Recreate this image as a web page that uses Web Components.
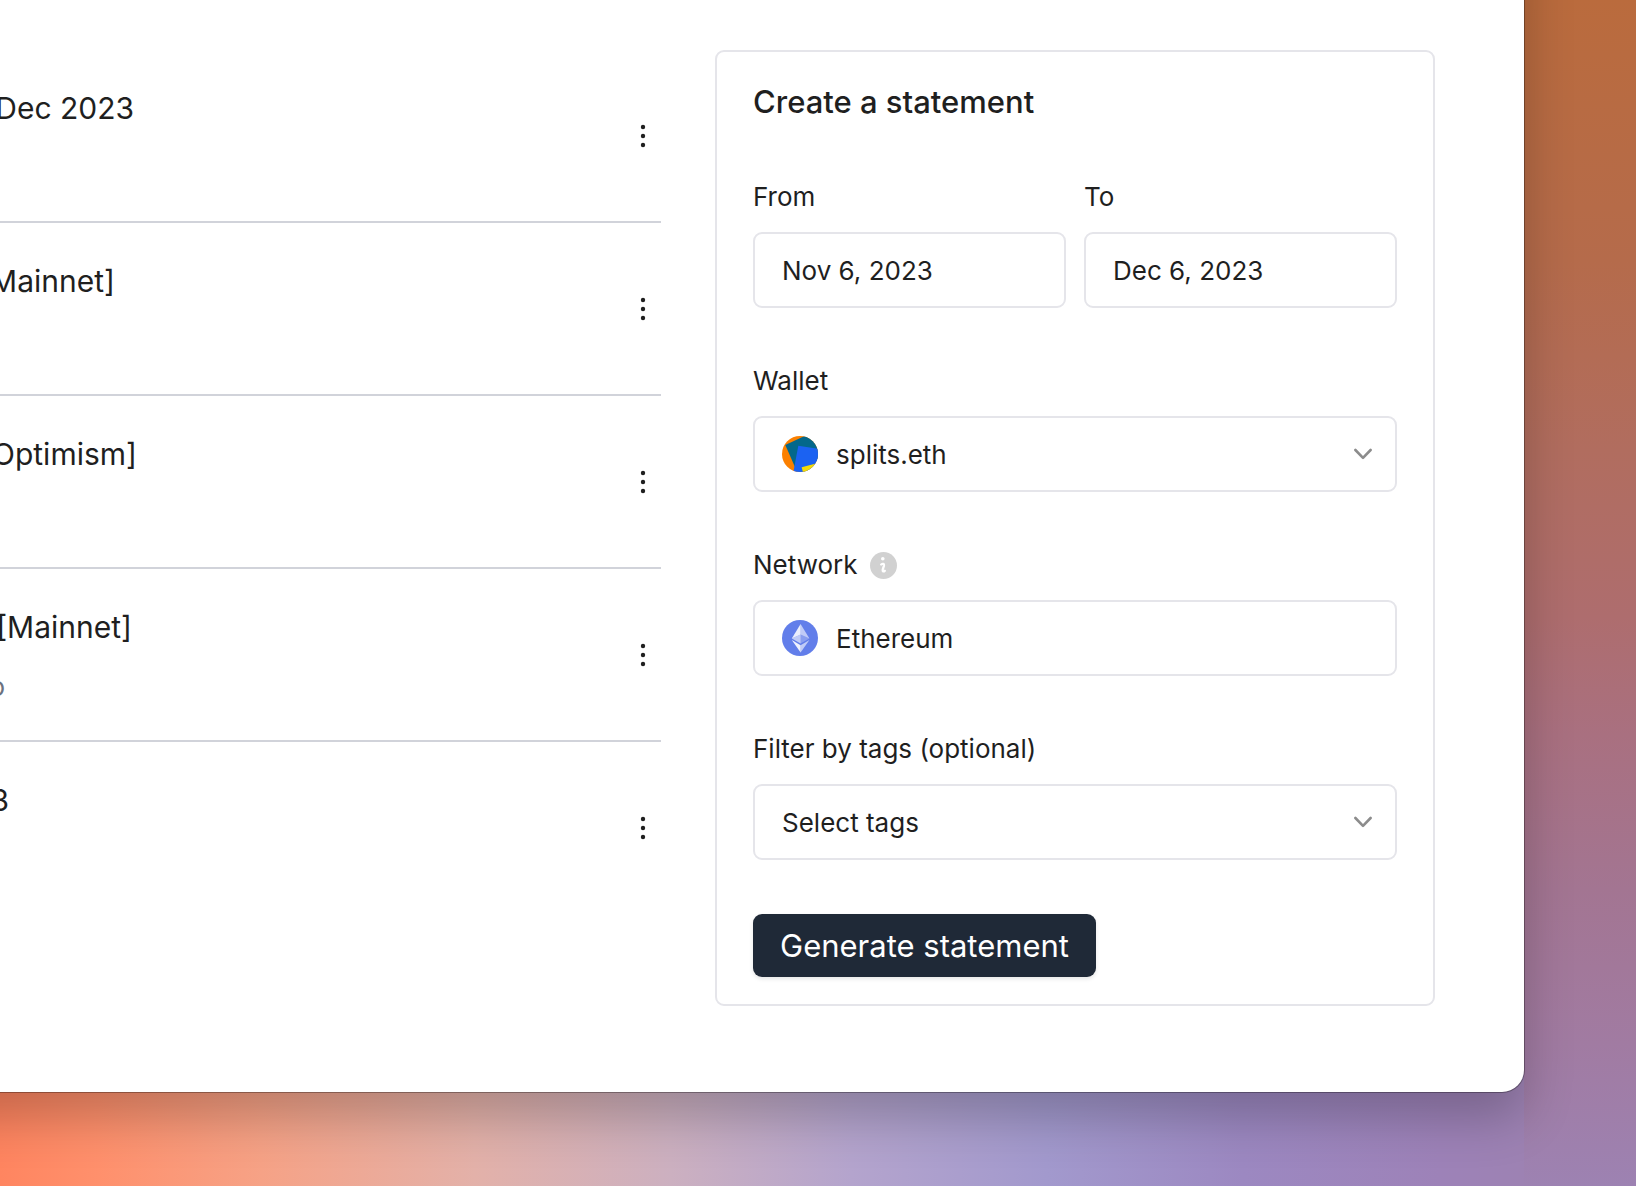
<!DOCTYPE html>
<html lang="en">
<head>
<meta charset="utf-8">
<title>Statements</title>
<style>
    :root {
        --text: #1f1f1f;
        --muted-text: #6b7280;
        --border: #e5e5ea;
        --divider: #d1d3da;
        --surface: #ffffff;
        --primary: #1f2937;
        --icon: #8c8c8c;
    }
    html {
        min-height: 100%;
        background:
            linear-gradient(to bottom, #ba6b3d 0%, #b56b4b 22%, #b16d5f 38%, #ae6d6e 52%, #a97080 62%, #a37592 75%, #a17ba2 88%, #9d82b2 100%) right top / 112px 100% no-repeat,
            linear-gradient(to right, #ff8560 0%, #ff906c 6%, #f6a286 16%, #e3b1a9 29%, #ccb0c0 41%, #b4a4cd 52%, #a299cd 64%, #9c88c1 76%, #9d82b8 88%, #9d82b2 94%);
    }
    body {
        margin: 0;
        font-family: Inter, "Liberation Sans", sans-serif;
        color: var(--text);
    }
</style>
</head>
<body>
<app-window>
    <statement-list slot="list">
        <statement-row visible="134">Dec 2023</statement-row>
        <statement-row visible="115">Mainnet]</statement-row>
        <statement-row visible="137">Optimism]</statement-row>
        <statement-row visible="132" note="o">[Mainnet]</statement-row>
        <statement-row visible="9">3</statement-row>
    </statement-list>
    <statement-form></statement-form>
</app-window>

<script>
const icons = {
    more: `<svg width="36" height="36" viewBox="0 0 36 36" fill="currentColor" aria-hidden="true">
        <circle cx="18" cy="9" r="2.2"/><circle cx="18" cy="18" r="2.2"/><circle cx="18" cy="27" r="2.2"/>
    </svg>`,
    chevron: `<svg width="18" height="12" viewBox="0 0 18 12" fill="none" stroke="currentColor" stroke-width="2.6" stroke-linecap="round" stroke-linejoin="round" aria-hidden="true">
        <path d="M1.4 2L9 9.8L16.6 2"/>
    </svg>`,
    info: `<svg width="27" height="27" viewBox="0 0 27 27" aria-hidden="true">
        <circle cx="13.5" cy="13.5" r="13.5" fill="#d1d1d1"/>
        <circle cx="12.8" cy="6.7" r="1.8" fill="#fff"/>
        <path d="M11.2 12.5C12.6 11.3 14.4 11.7 14 13.6L12.7 17.6C12.3 19.6 13.6 19.9 14.8 18.8" fill="none" stroke="#fff" stroke-width="2.3" stroke-linecap="round" stroke-linejoin="round"/>
    </svg>`,
    wallet: `<svg width="36" height="36" viewBox="0 0 36 36" aria-hidden="true">
        <clipPath id="round"><circle cx="18" cy="18" r="18"/></clipPath>
        <g clip-path="url(#round)">
            <path d="M0 0H36V36H0Z" fill="#fb8000"/>
            <path d="M3.3 9L21 .8L30 -2L42 22L14 33.5Z" fill="#03688b"/>
            <path d="M16.3 9.8L38 13V38H11Z" fill="#1b62f2"/>
            <path d="M19.6 31.2L36 27V38H21.5Z" fill="#f4db05"/>
        </g>
    </svg>`,
    ethereum: `<svg width="36" height="36" viewBox="0 0 36 36" aria-hidden="true">
        <circle cx="18" cy="18" r="18" fill="#627eea"/>
        <path d="M18.6 4V14.5L9.8 18.4Z" fill="#fff" opacity=".88"/>
        <path d="M18.6 4V14.5L27.4 18.4Z" fill="#fff" opacity=".6"/>
        <path d="M18.6 14.5V23.6L9.8 18.4Z" fill="#fff" opacity=".6"/>
        <path d="M18.6 14.5V23.6L27.4 18.4Z" fill="#fff" opacity=".25"/>
        <path d="M9.8 20.1L18.6 25.3V32.4Z" fill="#fff" opacity=".9"/>
        <path d="M27.4 20.1L18.6 25.3V32.4Z" fill="#fff" opacity=".6"/>
    </svg>`
};

class AppWindow extends HTMLElement {
    connectedCallback() {
        this.attachShadow({ mode: 'open' });
        this.shadowRoot.innerHTML = `
            <style>
                :host {
                    display: block;
                    padding-right: 112px;
                    padding-bottom: 94px;
                    overflow: hidden;
                }
                /* top and left edges sit outside the viewport */
                .window {
                    display: grid;
                    grid-template-columns: minmax(0, 1fr) 720px;
                    gap: 54px;
                    align-items: start;
                    margin-top: -72px;
                    margin-left: -72px;
                    padding: 122px 89px 86px 72px;
                    background: var(--surface);
                    border-radius: 0 0 22px 0;
                    box-shadow: 0 0 0 1px rgba(0, 0, 0, 0.3), 0 26px 50px rgba(0, 0, 0, 0.23);
                }
            </style>
            <main class="window">
                <slot name="list"></slot>
                <slot></slot>
            </main>
        `;
    }
}
customElements.define('app-window', AppWindow);

class StatementList extends HTMLElement {
    connectedCallback() {
        this.attachShadow({ mode: 'open' });
        this.shadowRoot.innerHTML = `
            <style>
                :host {
                    display: block;
                    min-width: 0;
                }
                ::slotted(:not(:last-child)) {
                    border-bottom: 2px solid var(--divider);
                }
            </style>
            <slot></slot>
        `;
    }
}
customElements.define('statement-list', StatementList);

class StatementRow extends HTMLElement {
    connectedCallback() {
        const visible = this.getAttribute('visible');
        const note = this.getAttribute('note') || '';
        this.attachShadow({ mode: 'open' });
        this.shadowRoot.innerHTML = `
            <style>
                :host {
                    display: flex;
                    align-items: center;
                    justify-content: space-between;
                    padding: 36px 0;
                }
                .text {
                    display: grid;
                    gap: 18px;
                }
                /* text runs off the left edge of the window */
                .title, .note {
                    display: flex;
                    justify-content: flex-end;
                    white-space: nowrap;
                }
                .title {
                    width: ${visible}px;
                    font-size: 30px;
                    line-height: 45px;
                }
                .note {
                    width: 5px;
                    height: 36px;
                    font-size: 26px;
                    line-height: 38px;
                    color: var(--muted-text);
                }
                button {
                    display: flex;
                    padding: 0;
                    border: 0;
                    background: none;
                    color: inherit;
                    cursor: pointer;
                }
            </style>
            <div class="text">
                <div class="title"><slot></slot></div>
                <div class="note">${note}</div>
            </div>
            <button type="button" aria-label="More">${icons.more}</button>
        `;
    }
}
customElements.define('statement-row', StatementRow);

class FormField extends HTMLElement {
    connectedCallback() {
        const label = this.getAttribute('label');
        const value = this.getAttribute('value');
        const icon = icons[this.getAttribute('icon')] || '';
        const isSelect = this.getAttribute('type') === 'select';
        const control = isSelect
            ? `<select id="control"><option>${value}</option></select>`
            : `<input id="control" type="text" value="${value}" ${icon ? 'readonly' : ''}>`;
        this.attachShadow({ mode: 'open' });
        this.shadowRoot.innerHTML = `
            <style>
                :host {
                    display: flex;
                    flex-direction: column;
                    gap: 16px;
                    min-width: 0;
                    font-size: 26px;
                    line-height: 38px;
                }
                .label {
                    display: flex;
                    align-items: center;
                    gap: 12px;
                }
                .label svg {
                    display: block;
                }
                .box {
                    display: grid;
                    align-items: center;
                }
                .box > * {
                    grid-area: 1 / 1;
                }
                .box svg {
                    pointer-events: none;
                    z-index: 1;
                }
                .leading {
                    display: flex;
                    margin-left: 29px;
                    justify-self: start;
                }
                .trailing {
                    display: flex;
                    margin-right: 25px;
                    justify-self: end;
                    color: var(--icon);
                }
                input, select {
                    box-sizing: border-box;
                    width: 100%;
                    height: 76px;
                    margin: 0;
                    padding: 0 27px 0 ${icon ? 81 : 27}px;
                    border: 2px solid var(--border);
                    border-radius: 9px;
                    background: var(--surface);
                    color: inherit;
                    font: inherit;
                    appearance: none;
                }
                select {
                    padding-top: 2px;
                }
            </style>
            <div class="label">
                <label for="control">${label}</label>
                ${this.hasAttribute('info') ? icons.info : ''}
            </div>
            <div class="box">
                ${control}
                ${icon ? `<span class="leading">${icon}</span>` : ''}
                ${isSelect ? `<span class="trailing">${icons.chevron}</span>` : ''}
            </div>
        `;
    }
}
customElements.define('form-field', FormField);

class PrimaryButton extends HTMLElement {
    connectedCallback() {
        this.attachShadow({ mode: 'open' });
        this.shadowRoot.innerHTML = `
            <style>
                :host {
                    display: flex;
                }
                button {
                    padding: 9px 27px;
                    border: 0;
                    border-radius: 9px;
                    background: var(--primary);
                    box-shadow: 0 2px 4px rgba(0, 0, 0, 0.1);
                    color: #fff;
                    font: inherit;
                    font-size: 31px;
                    line-height: 45px;
                    cursor: pointer;
                }
            </style>
            <button type="button"><slot></slot></button>
        `;
    }
}
customElements.define('primary-button', PrimaryButton);

class StatementForm extends HTMLElement {
    connectedCallback() {
        this.attachShadow({ mode: 'open' });
        this.shadowRoot.innerHTML = `
            <style>
                :host {
                    display: block;
                }
                form {
                    display: flex;
                    flex-direction: column;
                    gap: 54px;
                    padding: 27px 36px;
                    border: 2px solid var(--border);
                    border-radius: 9px;
                }
                h2 {
                    margin: 0;
                    font-size: 31px;
                    font-weight: 500;
                    line-height: 45px;
                }
                .dates {
                    display: grid;
                    grid-template-columns: 1fr 1fr;
                    gap: 18px;
                }
            </style>
            <form>
                <h2>Create a statement</h2>
                <div class="dates">
                    <form-field label="From" value="Nov 6, 2023"></form-field>
                    <form-field label="To" value="Dec 6, 2023"></form-field>
                </div>
                <form-field label="Wallet" type="select" icon="wallet" value="splits.eth"></form-field>
                <form-field label="Network" icon="ethereum" value="Ethereum" info></form-field>
                <form-field label="Filter by tags (optional)" type="select" value="Select tags"></form-field>
                <primary-button>Generate statement</primary-button>
            </form>
        `;
    }
}
customElements.define('statement-form', StatementForm);
</script>
</body>
</html>
